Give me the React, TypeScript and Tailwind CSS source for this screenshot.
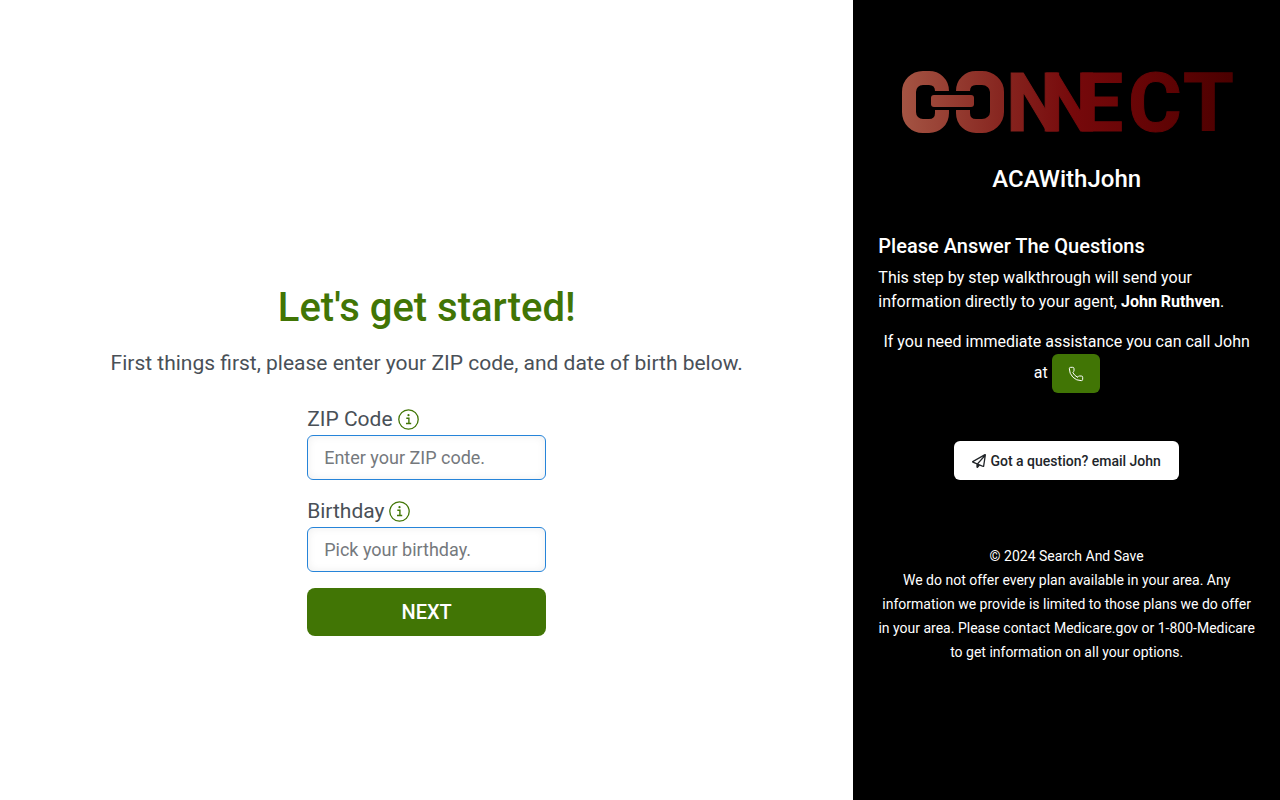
import { Phone } from "lucide-react";
import { FaRegPaperPlane } from "react-icons/fa6";

const fields = [
  {
    id: "zip",
    label: "ZIP Code",
    placeholder: "Enter your ZIP code.",
  },
  {
    id: "birthday",
    label: "Birthday",
    placeholder: "Pick your birthday.",
  },
];

function InfoIcon() {
  return (
    <svg viewBox="0 0 21 21" className="size-[21px] text-[#417505]" fill="none" stroke="currentColor">
      <circle cx="10.500" cy="10.500" r="9.700" strokeWidth="1.300" />
      <path d="M8.300 9.300H10.900V14.500M8 14.500H13.200" strokeWidth="1.400" />
      <circle cx="10.500" cy="6.200" r="1.100" fill="currentColor" stroke="none" />
    </svg>
  );
}

function Logo() {
  return (
    <svg
      viewBox="0 0 330 64"
      className="w-[330px] max-w-full overflow-visible"
      role="img"
      aria-label="Connect"
    >
      <defs>
        <linearGradient id="brand" gradientUnits="userSpaceOnUse" x1="0" y1="0" x2="330" y2="0">
          <stop offset="0" stopColor="#a45443" />
          <stop offset="0.3" stopColor="#872620" />
          <stop offset="0.52" stopColor="#76090b" />
          <stop offset="0.75" stopColor="#650405" />
          <stop offset="1" stopColor="#4b0000" />
        </linearGradient>
      </defs>

      {/* Chain links */}
      <g fill="none" stroke="url(#brand)" strokeWidth="14">
        <path d="M40 21C40 13 34 8 27 8H21C13 8 7 14 7 22V42C7 50 13 56 21 56H27C34 56 40 51 40 43V40" />
        <path d="M61 21C61 13 67 8 74 8H80C88 8 95 14 95 22V42C95 50 88 56 80 56H74C67 56 61 51 61 43V40" />
      </g>
      <rect x="29" y="25" width="43" height="12" rx="3" fill="url(#brand)" />

      <text
        x="104 138 175 226 281"
        y="61"
        fill="url(#brand)"
        stroke="url(#brand)"
        className="font-['Roboto',sans-serif] text-[82px] leading-none font-bold"
      >
        NNECT
      </text>
    </svg>
  );
}

export default function App() {
  return (
    <div className="grid min-h-screen grid-cols-3 bg-white font-['Roboto',sans-serif] text-[#495057]">
      {/* Form */}
      <main className="col-span-2 flex flex-col items-center justify-center px-4 pt-30 text-[21px] leading-[31px]">
        <h1 className="mb-4 text-[40px] leading-12 font-medium text-[#417505]">
          Let's get started!
        </h1>
        <p className="mb-[25px] text-center">
          First things first, please enter your ZIP code, and date of birth below.
        </p>

        <form className="flex w-[239px] flex-col gap-4" onSubmit={(e) => e.preventDefault()}>
          {fields.map((field) => (
            <div key={field.id} className="flex flex-col">
              <label htmlFor={field.id} className="flex items-center gap-[5px]">
                {field.label}
                <InfoIcon />
              </label>
              <input
                id={field.id}
                type="text"
                placeholder={field.placeholder}
                className="h-[45px] w-full rounded-md border border-[#2684d9] bg-white px-4 text-lg shadow-[inset_0_0_8px_#eee] placeholder:text-[#75797d]"
              />
            </div>
          ))}
          <button
            type="submit"
            className="h-12 rounded-lg bg-[#417505] text-xl font-medium text-white"
          >
            NEXT
          </button>
        </form>
      </main>

      {/* Agent sidebar */}
      <aside className="flex flex-col items-center bg-black px-[25px] pt-[70px] pb-8 text-white">
        <Logo />
        <h2 className="mt-[30px] mb-10 text-2xl leading-[30px] font-medium">ACAWithJohn</h2>

        <div className="mb-4 w-full">
          <h3 className="mb-2 text-xl leading-6 font-medium">Please Answer The Questions</h3>
          <p>
            This step by step walkthrough will send your information directly to your agent,{" "}
            <strong>John Ruthven</strong>.
          </p>
        </div>

        <p className="mb-12 text-center">
          If you need immediate assistance you can call John at{" "}
          <button
            type="button"
            aria-label="Call John"
            className="inline-flex h-[39px] w-12 items-center justify-center rounded-md bg-[#417505] align-middle text-sm"
          >
            <Phone size={16} strokeWidth={1.5} />
          </button>
        </p>

        <button
          type="button"
          className="flex h-[39px] items-center gap-1 rounded-md bg-white px-[18px] text-sm font-medium text-[#212529]"
        >
          <FaRegPaperPlane />
          Got a question? email John
        </button>

        <footer className="mt-16 text-center text-sm leading-6">
          <p>© 2024 Search And Save</p>
          <p>
            We do not offer every plan available in your area. Any information we provide is limited
            to those plans we do offer in your area. Please contact Medicare.gov or 1-800-Medicare
            to get information on all your options.
          </p>
        </footer>
      </aside>
    </div>
  );
}
